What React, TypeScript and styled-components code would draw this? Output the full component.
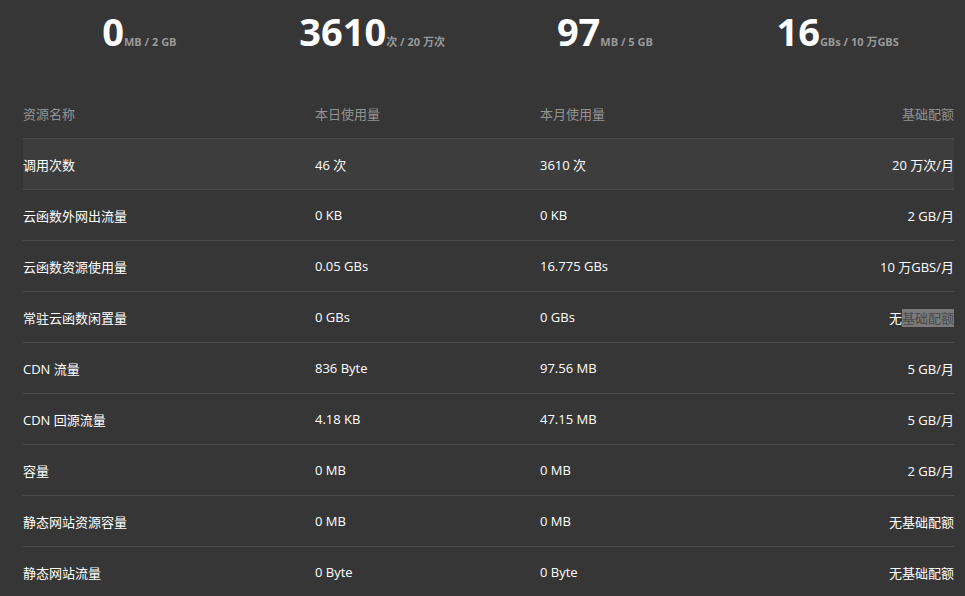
import React from 'react'
import styled, { createGlobalStyle } from 'styled-components'

const GlobalStyle = createGlobalStyle`
  html, body {
    margin: 0;
    padding: 0;
    background: #363636;
  }
  body {
    font-family: 'Open Sans', 'Noto Sans CJK SC', sans-serif;
    color: #fff;
  }
`

const stats = [
  { value: '0', unit: 'MB / 2 GB' },
  { value: '3610', unit: '次 / 20 万次' },
  { value: '97', unit: 'MB / 5 GB' },
  { value: '16', unit: 'GBs / 10 万GBS' },
]

const rows = [
  { name: '调用次数', day: '46 次', month: '3610 次', quota: '20 万次/月' },
  { name: '云函数外网出流量', day: '0 KB', month: '0 KB', quota: '2 GB/月' },
  { name: '云函数资源使用量', day: '0.05 GBs', month: '16.775 GBs', quota: '10 万GBS/月' },
  { name: '常驻云函数闲置量', day: '0 GBs', month: '0 GBs', quota: '无基础配额', selected: true },
  { name: 'CDN 流量', day: '836 Byte', month: '97.56 MB', quota: '5 GB/月' },
  { name: 'CDN 回源流量', day: '4.18 KB', month: '47.15 MB', quota: '5 GB/月' },
  { name: '容量', day: '0 MB', month: '0 MB', quota: '2 GB/月' },
  { name: '静态网站资源容量', day: '0 MB', month: '0 MB', quota: '无基础配额' },
  { name: '静态网站流量', day: '0 Byte', month: '0 Byte', quota: '无基础配额' },
]

const Page = styled.div`
  padding: 0 11px 0 23px;
  height: 596px;
  overflow: hidden;
`

const StatGrid = styled.div`
  display: grid;
  grid-template-columns: repeat(4, 1fr);
  height: 88px;
`

const Stat = styled.div`
  display: flex;
  justify-content: center;
  align-items: baseline;
  padding-top: 6px;
`

const StatValue = styled.span`
  font-size: 38px;
  font-weight: 700;
  line-height: 50px;
  color: #fff;
`

const StatUnit = styled.span`
  font-size: 11px;
  font-weight: 700;
  color: #9a9a9a;
`

const Row = styled.div<{ $head?: boolean; $hover?: boolean }>`
  display: grid;
  grid-template-columns: 292px 225px 1fr auto;
  align-items: center;
  height: 50px;
  border-bottom: 1px solid #4b4b4b;
  background: ${(p) => (p.$hover ? '#3d3d3d' : 'transparent')};
  font-size: 13px;
  color: ${(p) => (p.$head ? '#939393' : '#fff')};
  font-weight: 400;
`

const Cell = styled.div<{ $right?: boolean }>`
  text-align: ${(p) => (p.$right ? 'right' : 'left')};
  white-space: nowrap;
`

const Selected = styled.span`
  background: #7a7a7a;
  color: #4a4a4a;
`

function Quota({ text, selected }: { text: string; selected?: boolean }) {
  if (!selected) return <>{text}</>
  return (
    <>
      {text.slice(0, 1)}
      <Selected>{text.slice(1)}</Selected>
    </>
  )
}

export default function App() {
  return (
    <>
      <GlobalStyle />
      <Page>
        <StatGrid>
          {stats.map((s) => (
            <Stat key={s.unit}>
              <StatValue>{s.value}</StatValue>
              <StatUnit>{s.unit}</StatUnit>
            </Stat>
          ))}
        </StatGrid>
        <Row $head>
          <Cell>资源名称</Cell>
          <Cell>本日使用量</Cell>
          <Cell>本月使用量</Cell>
          <Cell $right>基础配额</Cell>
        </Row>
        {rows.map((r, i) => (
          <Row key={r.name} $hover={i === 0}>
            <Cell>{r.name}</Cell>
            <Cell>{r.day}</Cell>
            <Cell>{r.month}</Cell>
            <Cell $right>
              <Quota text={r.quota} selected={r.selected} />
            </Cell>
          </Row>
        ))}
      </Page>
    </>
  )
}
